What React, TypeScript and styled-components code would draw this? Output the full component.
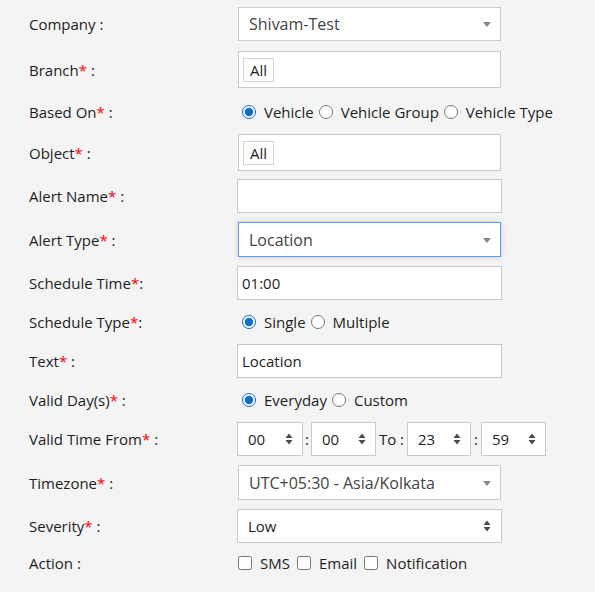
import React from 'react';
import styled, { createGlobalStyle } from 'styled-components';

const GlobalStyle = createGlobalStyle`
    html, body {
        margin: 0;
        padding: 0;
        background: #f4f4f4;
    }
    body {
        font-family: "Open Sans", "Liberation Sans", Arial, sans-serif;
        font-size: 15px;
        color: #222;
    }
`;

const Form = styled.div`
    padding: 7px 0 0 29px;
    width: 566px;
`;

const Row = styled.div<{ $h: number; $mt: number }>`
    display: grid;
    grid-template-columns: 208px 1fr;
    align-items: center;
    height: ${p => p.$h}px;
    margin-top: ${p => p.$mt}px;
`;

const Label = styled.div`
    color: #1e1e1e;
    white-space: nowrap;
`;

const Star = styled.span`
    color: #ff0000;
`;

const Field = styled.div<{ $w?: number; $ml?: number; $focus?: boolean }>`
    box-sizing: border-box;
    flex: none;
    width: ${p => p.$w ?? 265}px;
    margin-left: ${p => p.$ml ?? 0}px;
    height: 100%;
    background: #fff;
    border: 1px solid ${p => (p.$focus ? '#5b9bff' : '#cacaca')};
    box-shadow: ${p => (p.$focus ? '0 0 5px rgba(0, 0, 0, 0.18)' : 'none')};
    display: flex;
    align-items: center;
    position: relative;
`;

const FieldText = styled.span<{ $pl?: number; $select?: boolean }>`
    padding-left: ${p => p.$pl ?? 4}px;
    font-size: ${p => (p.$select ? 16 : 15)}px;
    color: ${p => (p.$select ? '#444' : '#1e1e1e')};
    white-space: nowrap;
`;

const Tag = styled.span`
    margin-left: 4px;
    height: 24px;
    padding: 0 6px;
    border: 1px solid #d4d4d4;
    box-sizing: border-box;
    display: inline-flex;
    align-items: center;
    font-size: 15px;
    color: #1e1e1e;
`;

const Arrow = styled.span`
    position: absolute;
    right: 9px;
    top: 50%;
    margin-top: -2px;
    width: 0;
    height: 0;
    border-left: 4px solid transparent;
    border-right: 4px solid transparent;
    border-top: 5px solid #888;
`;

const Spinner = styled.svg<{ $r: number }>`
    position: absolute;
    right: ${p => p.$r}px;
    top: 50%;
    margin-top: -6px;
`;

const Options = styled.div`
    display: flex;
    align-items: center;
    font-size: 15px;
    color: #1e1e1e;
`;

const Option = styled.label`
    display: inline-flex;
    align-items: center;
    white-space: nowrap;
`;

const Radio = styled.input.attrs({ type: 'radio' })`
    width: 14px;
    height: 14px;
    margin: 0 8px 0 5px;
    accent-color: #0b6fd6;
`;

const Check = styled.input.attrs({ type: 'checkbox' })`
    width: 14px;
    height: 14px;
    margin: 0 8px 0 1px;
`;

const Gap = styled.span<{ $w: number }>`
    display: inline-block;
    width: ${p => p.$w}px;
`;

const TimeRow = styled.div`
    display: flex;
    align-items: center;
    height: 100%;
    font-size: 15px;
    color: #1e1e1e;
`;

const Sep = styled.span<{ $w: number }>`
    flex: none;
    width: ${p => p.$w}px;
    text-align: center;
    white-space: nowrap;
`;

const DoubleArrow = ({ r }: { r: number }) => (
    <Spinner $r={r} width="8" height="12" viewBox="0 0 8 12">
        <path d="M4 0.5 L7.5 5 H0.5 Z" fill="#4a4a4a" />
        <path d="M4 11.5 L7.5 7 H0.5 Z" fill="#4a4a4a" />
    </Spinner>
);

const TimeBox = ({ value, w }: { value: string; w: number }) => (
    <Field $w={w}>
        <FieldText $pl={10}>{value}</FieldText>
        <DoubleArrow r={9} />
    </Field>
);

const req = <Star>*</Star>;

export default function App() {
    return (
        <>
            <GlobalStyle />
            <Form>
                <Row $h={34} $mt={0}>
                    <Label>Company :</Label>
                    <Field $w={263} $ml={1}>
                        <FieldText $pl={10} $select>Shivam-Test</FieldText>
                        <Arrow />
                    </Field>
                </Row>
                <Row $h={37} $mt={10}>
                    <Label>Branch{req} :</Label>
                    <Field $w={263} $ml={1}>
                        <Tag>All</Tag>
                    </Field>
                </Row>
                <Row $h={24} $mt={12}>
                    <Label>Based On{req} :</Label>
                    <Options>
                        <Option><Radio name="based" defaultChecked />Vehicle</Option>
                        <Option><Radio name="based" />Vehicle Group</Option>
                        <Option><Radio name="based" />Vehicle Type</Option>
                    </Options>
                </Row>
                <Row $h={37} $mt={10}>
                    <Label>Object{req} :</Label>
                    <Field $w={263} $ml={1}>
                        <Tag>All</Tag>
                    </Field>
                </Row>
                <Row $h={34} $mt={8}>
                    <Label>Alert Name{req} :</Label>
                    <Field />
                </Row>
                <Row $h={35} $mt={9}>
                    <Label>Alert Type{req} :</Label>
                    <Field $w={263} $ml={1} $focus>
                        <FieldText $pl={10} $select>Location</FieldText>
                        <Arrow />
                    </Field>
                </Row>
                <Row $h={34} $mt={9}>
                    <Label>Schedule Time{req}:</Label>
                    <Field>
                        <FieldText>01:00</FieldText>
                    </Field>
                </Row>
                <Row $h={24} $mt={10}>
                    <Label>Schedule Type{req}:</Label>
                    <Options>
                        <Option><Radio name="stype" defaultChecked />Single</Option>
                        <Option><Radio name="stype" />Multiple</Option>
                    </Options>
                </Row>
                <Row $h={34} $mt={10}>
                    <Label>Text{req} :</Label>
                    <Field>
                        <FieldText>Location</FieldText>
                    </Field>
                </Row>
                <Row $h={24} $mt={10}>
                    <Label>Valid Day(s){req} :</Label>
                    <Options>
                        <Option><Radio name="days" defaultChecked />Everyday</Option>
                        <Option><Radio name="days" />Custom</Option>
                    </Options>
                </Row>
                <Row $h={34} $mt={10}>
                    <Label>Valid Time From{req} :</Label>
                    <TimeRow>
                        <TimeBox value="00" w={66} />
                        <Sep $w={8}>:</Sep>
                        <TimeBox value="00" w={65} />
                        <Sep $w={31}>To :</Sep>
                        <TimeBox value="23" w={64} />
                        <Sep $w={10}>:</Sep>
                        <TimeBox value="59" w={65} />
                    </TimeRow>
                </Row>
                <Row $h={35} $mt={9}>
                    <Label>Timezone{req} :</Label>
                    <Field $w={263} $ml={1}>
                        <FieldText $pl={10} $select>UTC+05:30 - Asia/Kolkata</FieldText>
                        <Arrow />
                    </Field>
                </Row>
                <Row $h={34} $mt={9}>
                    <Label>Severity{req} :</Label>
                    <Field>
                        <FieldText $pl={10}>Low</FieldText>
                        <DoubleArrow r={10} />
                    </Field>
                </Row>
                <Row $h={24} $mt={8}>
                    <Label>Action :</Label>
                    <Options>
                        <Option><Check />SMS</Option>
                        <Gap $w={6} />
                        <Option><Check />Email</Option>
                        <Gap $w={6} />
                        <Option><Check />Notification</Option>
                    </Options>
                </Row>
            </Form>
        </>
    );
}
